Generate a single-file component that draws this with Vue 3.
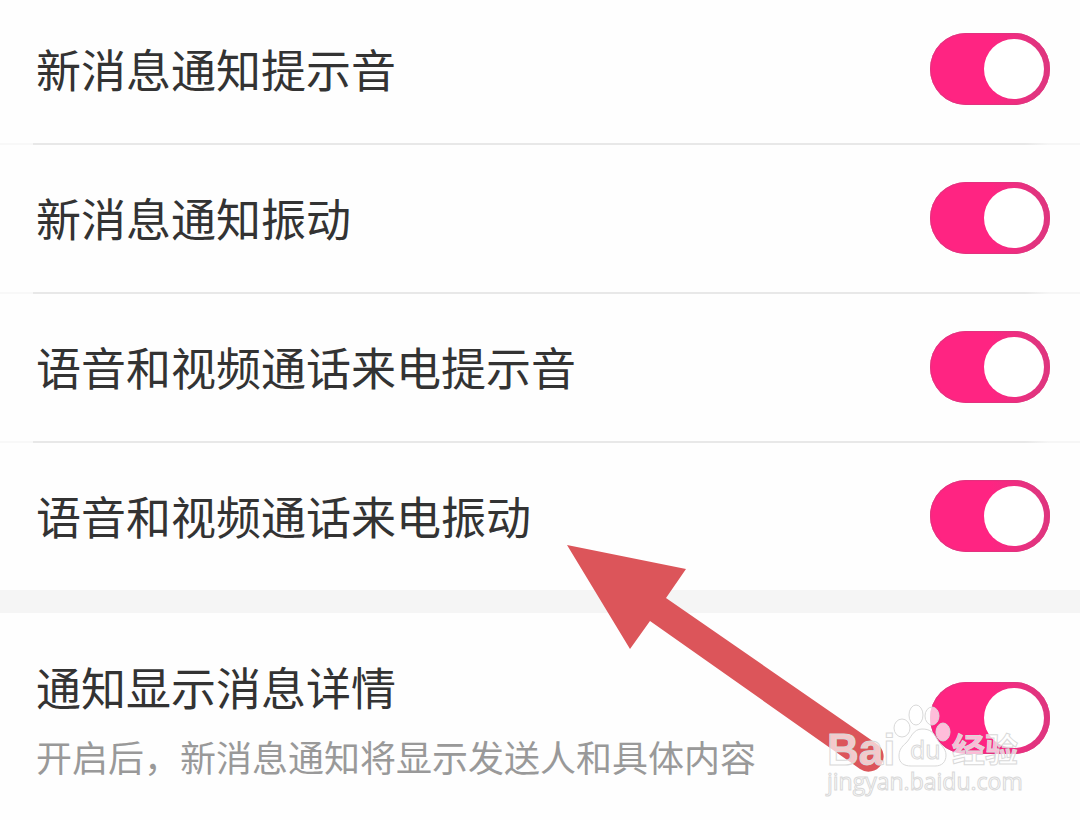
<script setup>
import { reactive } from 'vue'

const rows = reactive([
  { id: 'sound', label: '新消息通知提示音', on: true },
  { id: 'vibrate', label: '新消息通知振动', on: true },
  { id: 'call-sound', label: '语音和视频通话来电提示音', on: true },
  { id: 'call-vibrate', label: '语音和视频通话来电振动', on: true }
])

const detail = reactive({ on: true })
</script>

<template>
  <main class="page">
    <section class="group">
      <div v-for="row in rows" :key="row.id" class="row">
        <label class="title" :for="row.id">{{ row.label }}</label>
        <input :id="row.id" v-model="row.on" class="switch" type="checkbox" role="switch" />
      </div>
    </section>

    <section class="group detail">
      <div class="texts">
        <label class="title" for="detail">通知显示消息详情</label>
        <p id="detail-hint" class="hint">开启后，新消息通知将显示发送人和具体内容</p>
      </div>
      <input id="detail" v-model="detail.on" class="switch" type="checkbox" role="switch" aria-describedby="detail-hint" />
    </section>

    <svg class="arrow" width="320" height="232" viewBox="565 543 320 232" aria-hidden="true">
      <path d="M567 545 L686 569 L666 598 L877 744 A15 15 0 0 1 860 769 L650 621 L630 649 Z" fill="#dc555a" />
    </svg>

    <svg class="mark" width="204" height="98" viewBox="824 702 204 98">
      <g class="ink">
        <ellipse cx="902" cy="728" rx="8" ry="9" />
        <ellipse cx="916" cy="715" rx="7" ry="10" />
        <ellipse cx="932" cy="716" rx="7" ry="9" />
        <ellipse cx="943" cy="732" rx="7" ry="9" />
        <path d="M922 729 C913 729 911 738 906 743 C901 747 899 751 899 756 C899 763 904 766 911 766 L935 766 C942 766 946 762 946 755 C946 748 940 745 937 739 C933 732 930 729 922 729 Z" />
        <text class="brand" x="827" y="765">Bai</text>
        <text class="du" x="910" y="759">du</text>
        <text class="cn" x="952" y="762">经验</text>
        <text class="url" x="827" y="790">jingyan.baidu.com</text>
      </g>
    </svg>
  </main>
</template>

<style>
body {
  background: #fefefe;
}
</style>

<style scoped>
.page {
  position: relative;
  overflow: hidden;
  min-height: 100vh;
  background: #fefefe;
  font-family: "Noto Sans CJK SC", sans-serif;
}

.group,
.texts {
  display: flex;
  flex-direction: column;
}

.row {
  display: flex;
  align-items: center;
  justify-content: space-between;
  padding: 37px 30px 38px 36px;
  border-bottom: 2px solid;
  border-image: linear-gradient(to right, #f8f8f8 34px, #e8e8e8 34px, #e8e8e8 calc(100% - 56px), #f6f6f6 calc(100% - 32px)) 1;
}

.row:first-child {
  padding-top: 33px;
}

.row:last-child {
  border-bottom: 0;
}

.title {
  color: #333;
  font-size: 45px;
  line-height: 72px;
}

.switch {
  appearance: none;
  display: flex;
  flex: none;
  justify-content: flex-start;
  box-sizing: border-box;
  width: 120px;
  height: 72px;
  margin: 0;
  padding: 6px;
  border-radius: 36px;
  background: #ccc;
  cursor: pointer;
}

.switch::before {
  content: "";
  width: 60px;
  height: 60px;
  border-radius: 50%;
  background: #fff;
}

.switch:checked {
  justify-content: flex-end;
  background: linear-gradient(to right, #ff2482 50%, #e0357f 90%);
  box-shadow: inset 0 0 1px 1px #e0357f;
}

.detail {
  flex-direction: row;
  align-items: center;
  justify-content: space-between;
  padding: 38px 30px 30px 36px;
  border-top: 23px solid #f5f5f5;
}

.detail .switch {
  margin-bottom: 4px;
}

.hint {
  margin: 0;
  color: #999;
  font-size: 36px;
  line-height: 66px;
}

.arrow {
  position: absolute;
  left: 565px;
  top: 543px;
}

.mark {
  position: absolute;
  right: 52px;
  top: 702px;
}

.ink {
  fill: rgba(255, 255, 255, 0.7);
  stroke: #d9d9d9;
  stroke-width: 1;
}

.brand {
  font: bold 44px "Liberation Sans", sans-serif;
}

.du {
  font: 25px "Open Sans", sans-serif;
}

.cn {
  font: bold 33px "Noto Sans CJK SC", sans-serif;
}

.url {
  font: 23px "Open Sans", sans-serif;
}
</style>
